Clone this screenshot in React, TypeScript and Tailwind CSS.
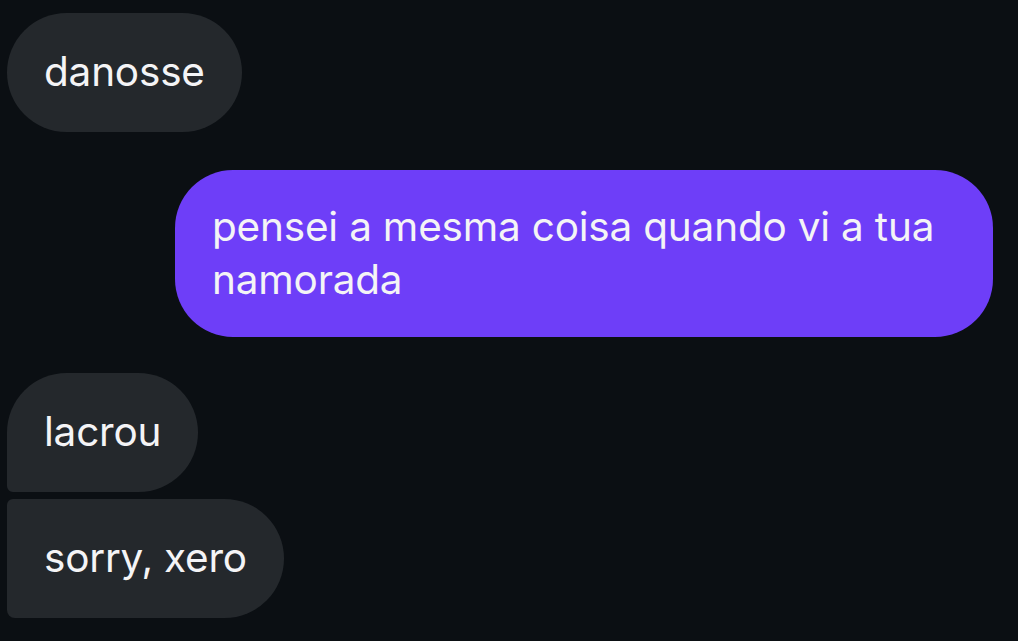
import React from 'react';

const font = { fontFamily: 'Inter, "Noto Sans", sans-serif' };

export default function App() {
  return (
    <div
      className="w-[1018px] h-[641px] bg-[#0b0f13] overflow-hidden flex flex-col pt-[13px] pl-[7px] pr-[25px] text-[#f4f4f6] text-[40.5px] leading-[53px] tracking-[-0.2px]"
      style={font}
    >
      <div className="self-start bg-[#24282c] rounded-full px-[37px] pt-[32px] pb-[34px]">danosse</div>

      <div className="self-end mt-[38px] w-[818px] bg-[#6e3ef8] rounded-[58px] pl-[37px] pr-[40px] pt-[30px] pb-[31px]">
        pensei a mesma coisa quando vi a tua namorada
      </div>

      <div className="mt-[36px] flex flex-col items-start gap-[7px]">
        <div className="bg-[#24282c] rounded-tl-[60px] rounded-bl-[6px] rounded-r-[60px] px-[37px] pt-[32px] pb-[34px]">
          lacrou
        </div>
        <div className="bg-[#24282c] rounded-tl-[6px] rounded-bl-[8px] rounded-r-[60px] px-[37px] pt-[32px] pb-[34px]">
          sorry, xero
        </div>
      </div>
    </div>
  );
}
